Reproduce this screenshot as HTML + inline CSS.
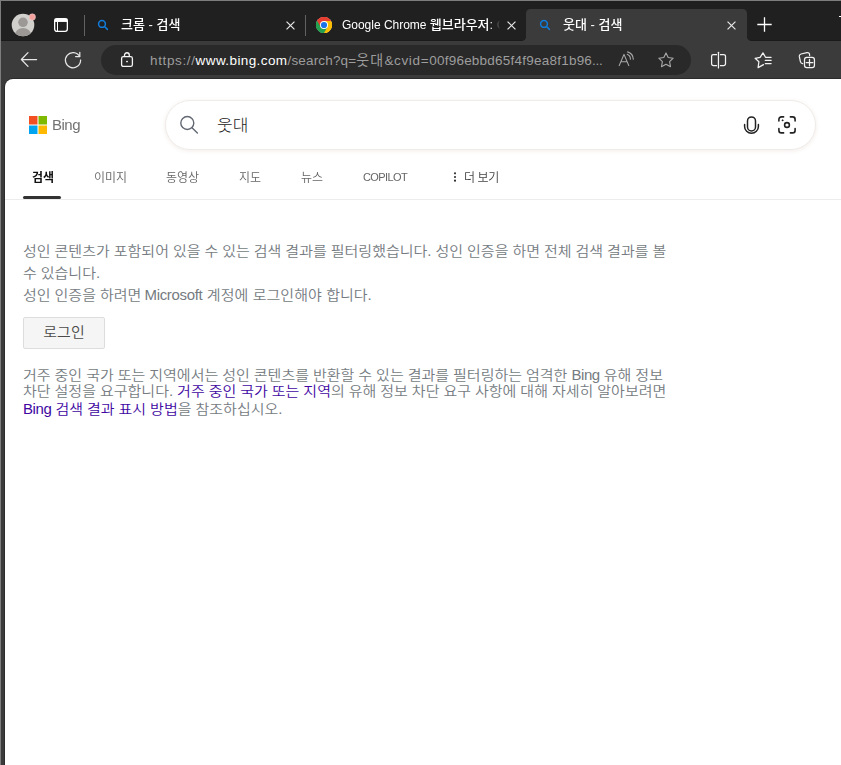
<!DOCTYPE html>
<html lang="ko">
<head>
<meta charset="utf-8">
<title>웃대 - 검색</title>
<style>
html,body{margin:0;padding:0;}
body{width:841px;height:765px;overflow:hidden;background:#3b3b3b;position:relative;
  font-family:"Liberation Sans","Noto Sans CJK KR",sans-serif;}
.abs{position:absolute;}
svg{position:absolute;overflow:visible;}
#frame-top{left:0;top:0;width:841px;height:1px;background:#7d7d7d;}
#frame-left{left:0;top:0;width:1px;height:765px;background:#7d7d7d;}
#tabbar{left:1px;top:1px;width:840px;height:39px;background:#202020;border-bottom:1px solid #1a1a1a;}
#toolbar{left:1px;top:41px;width:840px;height:38px;background:#3b3b3b;}
#page{left:5px;top:79px;width:836px;height:686px;background:#fff;border-top-left-radius:8px;overflow:hidden;box-shadow:0 0 0 1px #2c2c2c;}
.tabtitle{color:#fff;font-size:13px;line-height:16px;white-space:nowrap;font-weight:500;will-change:transform;}
.tabtitle i{font-style:normal;font-size:12px;letter-spacing:-0.02px;}
#activetab{left:526px;top:9px;width:221px;height:32px;background:#3b3b3b;border-radius:4.5px 4.5px 0 0;}
.cornerL{left:522px;top:37px;width:4px;height:4px;background:radial-gradient(circle at 0 0,#202020 3.6px,#3b3b3b 4.2px);}
.cornerR{left:747px;top:37px;width:4px;height:4px;background:radial-gradient(circle at 100% 0,#202020 3.6px,#3b3b3b 4.2px);}
#addr{left:101px;top:45px;width:590px;height:30px;border-radius:15px;background:#292929;}
#url{left:150px;top:50.5px;font-size:13.5px;line-height:18px;color:#9d9d9d;white-space:nowrap;}
#url b{color:#fff;font-weight:normal;}
#u1{letter-spacing:0.634px}#u2{letter-spacing:0.405px}#u3{letter-spacing:0.162px}#u5{letter-spacing:0.649px}#u6{letter-spacing:0.228px}#u7{letter-spacing:-0.252px}#u4{font-size:14px;letter-spacing:1.17px}
.sep{width:1px;height:21px;top:15px;background:#626262;}
/* page */
#page .abs{position:absolute;}
#sbox{left:160px;top:21px;width:648.6px;height:47.6px;border:1px solid #efebe8;border-radius:25px;background:#fff;
  box-shadow:0 1px 4px rgba(150,100,70,.12);}
.nav{font-size:12px;line-height:14px;color:#666;white-space:nowrap;top:92.4px;font-weight:350;will-change:transform;}
#navline{left:0;top:120px;width:836px;height:1px;background:#ececec;}
#navsel{left:18px;top:117px;width:38px;height:3px;border-radius:2px;background:#333;}
.body1{left:18px;top:160.5px;font-size:15px;line-height:23.913px;color:#757b81;white-space:nowrap;font-weight:350;word-spacing:-0.2px;transform:scaleY(0.92);transform-origin:0 0;}
.body2{left:18px;top:288.4px;font-size:15px;line-height:18.478px;color:#757b81;white-space:nowrap;font-weight:350;word-spacing:-0.2px;transform:scaleY(0.92);transform-origin:0 0;}
.body2 span{color:#4007a2;}
.body1 i,.body2 i{font-style:normal;letter-spacing:-0.4px;}
#ms{letter-spacing:-0.33px;margin-left:-0.8px;}#p1c2{word-spacing:0.3px;}
#btn{left:18px;top:238px;width:80px;height:30px;border:1px solid #ddd;background:#f5f5f5;border-radius:2px;
  font-size:15px;line-height:30px;text-align:center;color:#444;}
</style>
</head>
<body>
<div id="tabbar" class="abs"></div>
<div id="toolbar" class="abs"></div>
<div id="frame-top" class="abs"></div>
<div id="frame-left" class="abs"></div>
<div id="activetab" class="abs"></div>
<div class="abs cornerL"></div>
<div class="abs cornerR"></div>
<div id="addr" class="abs"></div>
<div class="abs" style="left:839px;top:16px;width:2px;height:1px;background:#fff;"></div>

<!-- profile avatar -->
<svg style="left:11px;top:13px" width="26" height="24" viewBox="0 0 26 24">
  <defs><clipPath id="avc"><circle cx="12" cy="12" r="11.3"/></clipPath></defs>
  <circle cx="12" cy="12" r="11.3" fill="#d2d0cd"/>
  <g clip-path="url(#avc)" fill="#9c9895">
    <circle cx="12" cy="9.3" r="4.8"/>
    <ellipse cx="12" cy="21.5" rx="8" ry="6.5"/>
  </g>
  <circle cx="21.3" cy="4" r="3.2" fill="#f5a19d" stroke="#e9d5d3" stroke-width="0.5"/>
</svg>
<!-- tab actions -->
<svg style="left:54px;top:18px" width="14" height="14" viewBox="0 0 14 14" fill="none" stroke="#fff">
  <rect x="0.65" y="0.65" width="12.7" height="12.7" rx="2.3" stroke-width="1.3"/>
  <path d="M0.65 2.3H13.35" stroke-width="3.3"/>
  <path d="M3.5 3.5V13.3" stroke-width="1"/>
</svg>
<div class="abs sep" style="left:84px"></div>
<!-- tab1 favicon -->
<svg style="left:95.8px;top:18px" width="14" height="14" viewBox="0 0 14 14" fill="none" stroke="#107cdc" stroke-width="1.5" stroke-linecap="round">
  <circle cx="6" cy="5.95" r="3.4"/><path d="M8.5 8.45L11.4 11.35"/>
</svg>
<div id="t1" class="abs tabtitle" style="left:121px;top:17.2px;">크롬 - 검색</div>
<svg class="x" style="left:286px;top:21px" width="9" height="9" viewBox="0 0 9 9" stroke="#e8e8e8" stroke-width="1.2"><path d="M0.55 0.55L8.45 8.45M8.45 0.55L0.55 8.45"/></svg>
<div class="abs sep" style="left:305px"></div>
<!-- chrome icon -->
<svg style="left:316px;top:17px" width="16" height="16" viewBox="0 0 48 48">
  <circle cx="24" cy="24" r="24" fill="#fff"/>
  <path d="M24 24 L3.2 12 A24 24 0 0 1 44.8 12 Z" fill="#e63e30"/>
  <path d="M24 24 L44.8 12 A24 24 0 0 1 24 48 Z" fill="#fbbc04"/>
  <path d="M24 24 L24 48 A24 24 0 0 1 3.2 12 Z" fill="#25a04e"/>
  <path d="M24 12 H44.8 A24 24 0 0 0 3.2 12 L13.6 30 Z" fill="#e63e30"/>
  <path d="M34.4 30 L24 48 A24 24 0 0 0 44.8 12 H24 Z" fill="#fbbc04"/>
  <path d="M13.6 30 L3.2 12 A24 24 0 0 0 24 48 L34.4 30 Z" fill="#25a04e"/>
  <circle cx="24" cy="24" r="12" fill="#fff"/>
  <circle cx="24" cy="24" r="9.3" fill="#1a73e8"/>
</svg>
<div id="t2" class="abs tabtitle" style="left:342px;top:17.2px;width:160px;overflow:hidden;-webkit-mask-image:linear-gradient(90deg,#000 148px,transparent 158px);mask-image:linear-gradient(90deg,#000 148px,transparent 158px);"><i>Google Chrome </i>웹브라우저: Chrome</div>
<svg class="x" style="left:507px;top:21px" width="9" height="9" viewBox="0 0 9 9" stroke="#e8e8e8" stroke-width="1.2"><path d="M0.55 0.55L8.45 8.45M8.45 0.55L0.55 8.45"/></svg>
<!-- tab3 -->
<svg style="left:538px;top:18px" width="14" height="14" viewBox="0 0 14 14" fill="none" stroke="#107cdc" stroke-width="1.5" stroke-linecap="round">
  <circle cx="6" cy="5.95" r="3.4"/><path d="M8.5 8.45L11.4 11.35"/>
</svg>
<div id="t3" class="abs tabtitle" style="left:563.2px;top:17.2px;">웃대 - 검색</div>
<svg class="x" style="left:727px;top:21px" width="9" height="9" viewBox="0 0 9 9" stroke="#e8e8e8" stroke-width="1.2"><path d="M0.55 0.55L8.45 8.45M8.45 0.55L0.55 8.45"/></svg>
<svg style="left:757px;top:17px" width="15" height="15" viewBox="0 0 15 15" stroke="#fff" stroke-width="1.3"><path d="M7.5 0.3V14.7M0.3 7.5H14.7"/></svg>

<!-- toolbar -->
<svg style="left:20px;top:51px" width="18" height="17" viewBox="0 0 18 17" fill="none" stroke="#e6e6e6" stroke-width="1.25" stroke-linecap="round" stroke-linejoin="round">
  <path d="M16.6 8.5H1.6M8 1.6L1.4 8.5L8 15.4"/>
</svg>
<svg style="left:64px;top:51px" width="18" height="18" viewBox="0 0 18 18" fill="none" stroke="#e6e6e6" stroke-width="1.25" stroke-linecap="round" stroke-linejoin="round">
  <path d="M15.6 5.4A7.6 7.6 0 1 0 16.6 9"/><path d="M15.8 1.3V5.5H11.6"/>
</svg>
<svg style="left:121px;top:51px" width="13" height="17" viewBox="0 0 13 17" fill="none" stroke="#f4f4f4" stroke-width="1.3">
  <rect x="0.6" y="5.65" width="10.8" height="9.8" rx="1.8"/>
  <path d="M3.5 5.65V4.15A2.4 2.4 0 0 1 8.3 4.15V5.65"/>
  <ellipse cx="6" cy="10.5" rx="1" ry="0.85" fill="#f0f0f0" stroke="none"/>
</svg>
<div id="url" class="abs"><span id="u1">https://</span><b id="u2">www.bing.com</b><span id="u3">/search?q=</span><span id="u4">웃대</span><span id="u5">&amp;cvid=</span><span id="u6">00f96ebbd65f4f9ea8f1b96</span><span id="u7">...</span></div>
<!-- read aloud -->
<svg style="left:618px;top:51px" width="17" height="16" viewBox="0 0 17 16" fill="none" stroke="#a9a9a9" stroke-width="1.1" stroke-linecap="round" stroke-linejoin="round">
  <path d="M1.2 14.6L6 3.4L10.8 14.6M2.9 10.8H9.1"/>
  <path d="M9.2 3.3A5.2 5.2 0 0 1 12.4 8.2"/>
  <path d="M9.6 0.9A8 8 0 0 1 15.3 8.2"/>
</svg>
<!-- star -->
<svg style="left:658px;top:52px" width="16" height="16" viewBox="0 0 16 16" fill="none" stroke="#a9a9a9" stroke-width="1.1" stroke-linejoin="round">
  <path d="M8 0.9L10.2 5.5L15.2 6.2L11.6 9.7L12.5 14.7L8 12.3L3.5 14.7L4.4 9.7L0.8 6.2L5.8 5.5Z"/>
</svg>
<!-- split screen -->
<svg style="left:710px;top:51px" width="17" height="18" viewBox="0 0 17 18" fill="none" stroke="#f2f2f2" stroke-width="1.25">
  <path d="M7 3.5H3.4A1.8 1.8 0 0 0 1.6 5.3V12.7A1.8 1.8 0 0 0 3.4 14.5H7"/>
  <path d="M9.9 3.5H13.7A1.8 1.8 0 0 1 15.5 5.3V12.7A1.8 1.8 0 0 1 13.7 14.5H9.9"/>
  <path d="M8.45 1.3V16.9" stroke-linecap="round"/>
</svg>
<!-- favorites -->
<svg style="left:754px;top:51px" width="19" height="18" viewBox="0 0 19 18" fill="none" stroke="#f2f2f2" stroke-width="1.25" stroke-linejoin="round">
  <path d="M9.5 13.6L4.1 16.6L4.9 10.7L1.1 7.3L6.1 6.3L9 1.9L11.5 6.3H17.1" stroke-linecap="round"/>
  <path d="M11.3 9.45H17.1M11.3 12.5H17.1" stroke-linecap="round"/>
</svg>
<!-- collections -->
<svg style="left:798px;top:51px" width="18" height="18" viewBox="0 0 18 18" fill="none" stroke="#f2f2f2" stroke-width="1.25" stroke-linecap="round" stroke-linejoin="round">
  <path d="M11.6 4.6V3.7Q11.4 1.2 9 1.6L3 3Q1 3.6 1.3 5.4L2.4 10.6Q2.9 12.5 4.7 12.7"/>
  <rect x="6.5" y="6.4" width="9.95" height="10.1" rx="2.3"/>
  <path d="M11.5 8.3V14.8M8.2 11.5H14.9"/>
</svg>

<div id="page" class="abs">
  <!-- logo -->
  <svg style="left:24px;top:37px" width="18" height="18" viewBox="0 0 18 18">
    <rect x="0" y="0" width="8.5" height="8.5" fill="#f25022"/>
    <rect x="9.5" y="0" width="8.5" height="8.5" fill="#7fba00"/>
    <rect x="0" y="9.5" width="8.5" height="8.5" fill="#00a4ef"/>
    <rect x="9.5" y="9.5" width="8.5" height="8.5" fill="#ffb900"/>
  </svg>
  <div id="bing" class="abs" style="left:47px;top:37px;font-size:15px;line-height:18px;color:#737373;letter-spacing:-0.5px;will-change:transform;">Bing</div>
  <div id="sbox" class="abs"></div>
  <svg style="left:174px;top:36px" width="20" height="20" viewBox="0 0 20 20" fill="none" stroke="#636873" stroke-width="1.4" stroke-linecap="round">
    <circle cx="8.3" cy="8" r="6.5"/><path d="M13 12.7L18.4 18.1"/>
  </svg>
  <div id="q" class="abs" style="left:212px;top:34.7px;font-size:17px;line-height:24px;color:#222;font-weight:300;transform:scaleY(0.93);">웃대</div>
  <!-- mic -->
  <svg style="left:738px;top:37px" width="17" height="19" viewBox="0 0 17 19" fill="none" stroke="#222" stroke-width="1.5" stroke-linecap="round">
    <rect x="4.5" y="0.9" width="8" height="14" rx="4"/>
    <path d="M1.6 8.6V10.4A6.9 6.9 0 0 0 15.4 10.4V8.6"/>
  </svg>
  <!-- visual search -->
  <svg style="left:773px;top:37px" width="18" height="18" viewBox="0 0 18 18" fill="none" stroke="#222" stroke-width="1.6" stroke-linecap="round">
    <path d="M0.9 5V3.4A2.5 2.5 0 0 1 3.4 0.9H5.6"/>
    <path d="M12.4 0.9H14.6A2.5 2.5 0 0 1 17.1 3.4V5"/>
    <path d="M17.1 12.6V14.4A2.5 2.5 0 0 1 14.6 16.9H12.4"/>
    <path d="M5.6 16.9H3.4A2.5 2.5 0 0 1 0.9 14.4V12.6"/>
    <circle cx="9" cy="9" r="2.4"/>
    <circle cx="4.5" cy="4.3" r="0.6" fill="#222" stroke-width="0.6"/>
  </svg>
  <!-- nav -->
  <div id="n1" class="abs nav" style="left:26.5px;color:#111;font-weight:700;">검색</div>
  <div id="n2" class="abs nav" style="left:88.9px;">이미지</div>
  <div id="n3" class="abs nav" style="left:161px;">동영상</div>
  <div id="n4" class="abs nav" style="left:234.3px;">지도</div>
  <div id="n5" class="abs nav" style="left:295.8px;">뉴스</div>
  <div id="n6" class="abs nav" style="left:358.3px;top:91.4px;font-size:11px;letter-spacing:-0.6px;font-weight:400;">COPILOT</div>
  <svg style="left:448.3px;top:92.9px" width="4" height="10" viewBox="0 0 4 10" fill="#333"><circle cx="2" cy="1.3" r="1.1"/><circle cx="2" cy="5" r="1.1"/><circle cx="2" cy="8.7" r="1.1"/></svg>
  <div id="n7" class="abs nav" style="left:459px;color:#444;letter-spacing:-0.4px;">더 보기</div>
  <div id="navline" class="abs"></div>
  <div id="navsel" class="abs"></div>
  <!-- body -->
  <div id="p1" class="abs body1"><span id="p1a">성인 콘텐츠가 포함되어 있을 수 있는 검색 결과를 필터링했습니다. 성인 인증을 하면 전체 검색 결과를 볼</span><br><span id="p1b">수 있습니다.</span><br><span id="p1c">성인 인증을 하려면 <i id="ms">Microsoft</i><span id="p1c2"> 계정에 로그인해야 합니다.</span></span></div>
  <div id="btn" class="abs"><span id="btnt" style="display:inline-block;transform:translateY(-0.8px) scaleY(0.93);font-weight:350;color:#4a4a4a;">로그인</span></div>
  <div id="p2" class="abs body2"><span id="p2a" style="color:inherit">거주 중인 국가 또는 지역에서는 성인 콘텐츠를 반환할 수 있는 결과를 필터링하는 엄격한 <i id="bg1">Bing</i> 유해 정보</span><br><span id="p2b" style="color:inherit">차단 설정을 요구합니다. <span>거주 중인 국가 또는 지역</span>의 유해 정보 차단 요구 사항에 대해 자세히 알아보려면</span><br><span id="p2c" style="color:inherit"><span><i id="bg2">Bing</i> 검색 결과 표시 방법</span>을 참조하십시오.</span></div>
</div>
</body>
</html>
